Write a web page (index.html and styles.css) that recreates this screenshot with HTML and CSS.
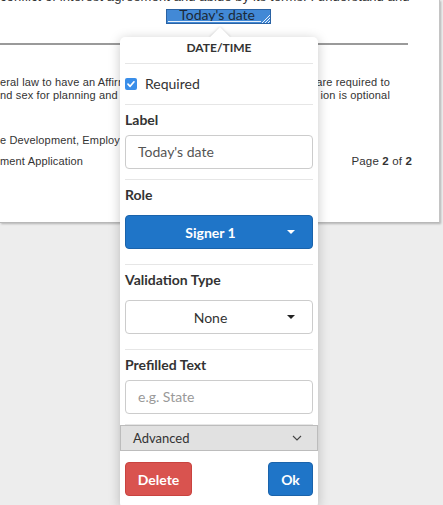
FILE: index.html
```html
<!DOCTYPE html>
<html>
<head>
<meta charset="utf-8">
<link rel="stylesheet" href="styles.css">
</head>
<body>
<div class="workspace">
  <div class="doc">
    <div class="doc-inner">
      <p class="line-top">conflict of interest agreement and abide by its terms. I understand and</p>
      <div class="rule"></div>
      <div class="para">
        <div class="row"><span class="left">eral law to have an Affirmative</span><span class="right">are required to</span></div>
        <div class="row"><span class="left">nd sex for planning and reporting</span><span class="right">ion is optional</span></div>
      </div>
      <div class="foot">
        <div class="row"><span class="left">e Development, Employment</span></div>
        <div class="row"><span class="left">ment Application</span><span class="right page">Page <b>2</b> of <b>2</b></span></div>
      </div>
    </div>
    <div class="field"><span class="field-text">Today's date</span><svg class="grip" width="9" height="9" viewBox="0 0 9 9"><path d="M1 9L9 1M4 9L9 4M7 9L9 7" stroke="#fff" stroke-width="0.9" fill="none"/></svg></div>
  </div>

  <div class="popover">
    <div class="arrow"><span></span></div>
    <div class="pop-head">DATE/TIME</div>
    <div class="section check-sec">
      <label class="check-row"><span class="checkbox"><svg width="12" height="12" viewBox="0 0 12 12"><path d="M3 6.2L5.1 8.3L9 3.8" stroke="#fff" stroke-width="1.7" fill="none" stroke-linecap="round" stroke-linejoin="round"/></svg></span>Required</label>
    </div>
    <div class="section">
      <div class="title">Label</div>
      <div class="input">Today's date</div>
    </div>
    <div class="section">
      <div class="title">Role</div>
      <div class="dropdown primary"><span class="dd-text">Signer 1</span><span class="caret white"></span></div>
    </div>
    <div class="section">
      <div class="title">Validation Type</div>
      <div class="dropdown plain"><span class="dd-text">None</span><span class="caret"></span></div>
    </div>
    <div class="section last">
      <div class="title">Prefilled Text</div>
      <div class="input placeholder">e.g. State</div>
    </div>
    <div class="advanced"><span>Advanced</span><svg width="10" height="6" viewBox="0 0 10 6"><path d="M1 1L5 5L9 1" stroke="#444" stroke-width="1.1" fill="none"/></svg></div>
    <div class="actions">
      <button class="btn danger">Delete</button>
      <button class="btn ok">Ok</button>
    </div>
  </div>
</div>
</body>
</html>
```

FILE: styles.css
```css
html, body {
  margin: 0;
  padding: 0;
  height: 100%;
  overflow: hidden;
}
body {
  background: #ededed;
}
.workspace {
  position: relative;
  height: 505px;
}
.doc {
  position: relative;
  width: 439px;
  height: 222px;
  background: #fff;
  border-right: 1px solid #c4c4c4;
  border-bottom: 1px solid #b8b8b8;
  box-shadow: 1px 1px 2px rgba(0,0,0,0.25);
  overflow: hidden;
  font-family: "Liberation Sans", Arial, sans-serif;
  color: #333;
}
.doc-inner {
  margin-top: -11px;
}
.line-top {
  margin: 0;
  font-size: 13px;
  line-height: 15px;
  white-space: nowrap;
  text-align: right;
  padding-right: 49px;
  overflow: hidden;
  letter-spacing: 0.1px;
}
.rule {
  margin-top: 39px;
  height: 2px;
  width: 408px;
  background: #9a9a9a;
}
.para {
  margin-top: 31px;
  font-size: 11px;
  line-height: 13px;
  letter-spacing: 0.15px;
}
.row {
  display: flex;
  justify-content: space-between;
  white-space: nowrap;
}
.para .row {
  padding-right: 49px;
}
.foot {
  margin-top: 32px;
  font-size: 11px;
  line-height: 13px;
  letter-spacing: 0.15px;
}
.foot .row + .row {
  margin-top: 8px;
}
.foot .row {
  padding-right: 27px;
}
.page {
  font-size: 11.5px;
}
.page b {
  font-weight: 700;
}
.field {
  position: absolute;
  left: 166px;
  top: 9px;
  width: 105px;
  height: 15px;
  box-sizing: border-box;
  background: #4289d6;
  border: 1px solid #2a62a3;
  display: flex;
  align-items: center;
  justify-content: flex-end;
  font-family: Lato, sans-serif;
  font-size: 14px;
  color: #1c2a38;
}
.field::after {
  content: "";
  position: absolute;
  left: 1px;
  right: 9px;
  bottom: 1px;
  height: 1px;
  background: #e8f1fb;
}
.field-text {
  line-height: 14px;
  margin-right: 6px;
  margin-top: -3px;
}
.grip {
  align-self: flex-end;
}

.popover {
  position: absolute;
  left: 120px;
  top: 37px;
  width: 198px;
  background: #fff;
  border-radius: 5px;
  box-shadow: 0 2px 12px rgba(0,0,0,0.22);
  font-family: Lato, sans-serif;
  color: #333;
  z-index: 2;
  padding-bottom: 12px;
}
.arrow {
  position: absolute;
  left: 88px;
  top: -11px;
  width: 24px;
  height: 11px;
  overflow: hidden;
}
.arrow span {
  position: absolute;
  left: 5px;
  top: 4px;
  width: 14px;
  height: 14px;
  background: #fff;
  transform: rotate(45deg);
  box-shadow: 0 0 3px rgba(0,0,0,0.2);
}
.pop-head {
  padding: 3px 5px 7px;
  text-align: center;
  font-weight: 700;
  font-size: 12px;
  line-height: 16px;
}
.section {
  margin: 0 5px;
  border-top: 1px solid #e6e6e6;
  padding: 5px 0 10px;
}
.section.last {
  border-bottom: 1px solid #e6e6e6;
}
.check-sec {
  padding: 10px 0;
}
.check-row {
  display: flex;
  align-items: center;
  font-size: 14px;
  line-height: 20px;
}
.checkbox {
  width: 12px;
  height: 12px;
  border-radius: 2px;
  background: #3a8ee9;
  margin-right: 8px;
  display: flex;
}
.title {
  font-weight: 700;
  font-size: 14px;
  line-height: 20px;
}
.input {
  margin-top: 5px;
  height: 34px;
  box-sizing: border-box;
  border: 1px solid #cccccc;
  border-radius: 4px;
  padding: 0 12px;
  font-size: 14px;
  line-height: 32px;
  color: #555;
}
.input.placeholder {
  color: #999;
}
.dropdown {
  margin-top: 10px;
  margin-bottom: 5px;
  height: 34px;
  box-sizing: border-box;
  border-radius: 4px;
  display: flex;
  align-items: center;
  padding: 0 17px 0 12px;
  font-size: 14px;
}
.dd-text {
  flex: 1;
  text-align: center;
}
.dropdown.primary {
  background: #1f75c8;
  border: 1px solid #1a63ab;
  color: #fff;
  font-weight: 700;
}
.dropdown.plain {
  background: #fff;
  border: 1px solid #cccccc;
  color: #333;
}
.caret {
  margin-left: 4px;
  width: 0;
  height: 0;
  border-left: 4px solid transparent;
  border-right: 4px solid transparent;
  border-top: 4px solid #222;
}
.caret.white {
  border-top-color: #fff;
}
.advanced {
  height: 26px;
  box-sizing: border-box;
  background: #e1e1e1;
  border: 1px solid #bcbcbc;
  display: flex;
  align-items: center;
  justify-content: space-between;
  padding: 0 15px 0 12px;
  font-size: 13px;
  color: #333;
}
.actions {
  margin-top: 11px;
  padding: 0 5px;
  display: flex;
  justify-content: space-between;
}
.btn {
  height: 34px;
  border-radius: 4px;
  font-family: Lato, sans-serif;
  font-weight: 700;
  font-size: 14px;
  color: #fff;
  padding: 0;
  cursor: pointer;
}
.btn.danger {
  width: 67px;
  background: #d9534f;
  border: 1px solid #c9433f;
}
.btn.ok {
  width: 45px;
  background: #1f75c8;
  border: 1px solid #1a63ab;
}
```
